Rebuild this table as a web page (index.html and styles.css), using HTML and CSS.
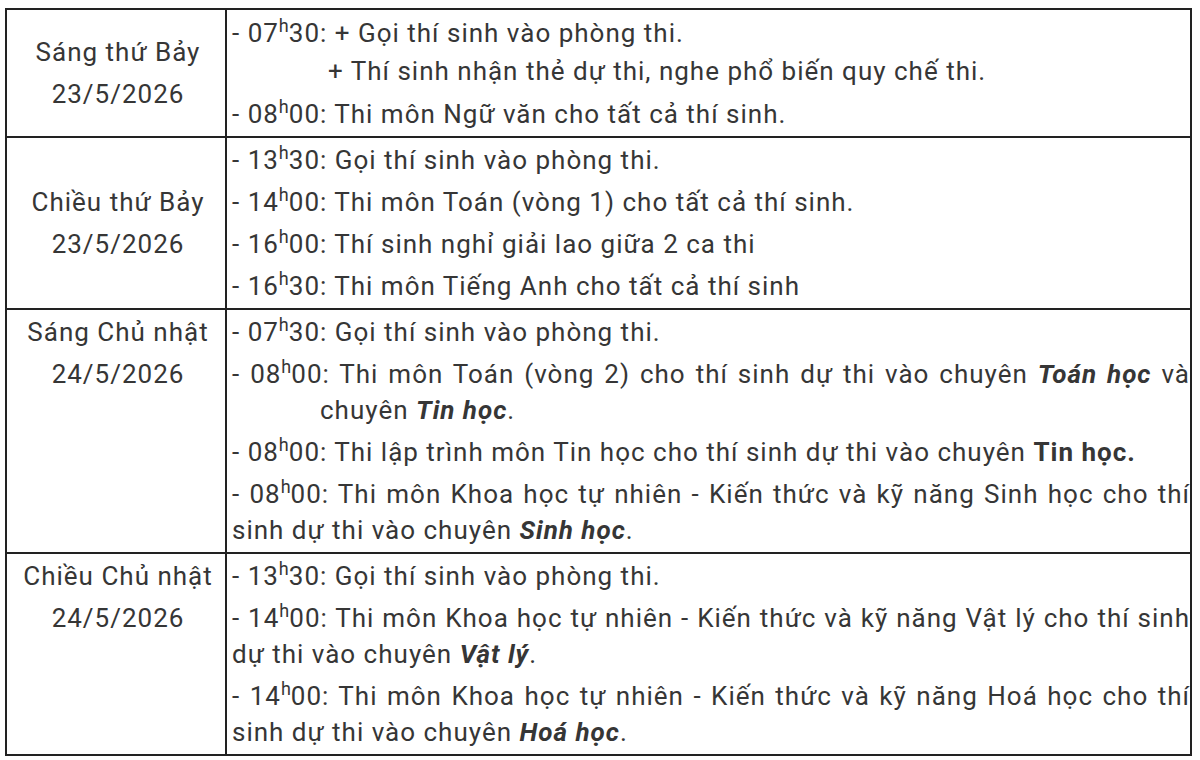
FILE: index.html
```html
<!DOCTYPE html>
<html lang="vi">
<head>
<meta charset="utf-8">
<title>Lịch thi</title>
<link rel="stylesheet" href="styles.css">
</head>
<body>
<div class="page">
  <table class="schedule">
    <tr class="row row-1">
      <td class="day day-middle">
        <p>Sáng thứ Bảy</p>
        <p>23/5/2026</p>
      </td>
      <td class="items">
        <p class="tall">- 07<sup>h</sup>30: + Gọi thí sinh vào phòng thi.<span class="sub sub-plus">+ Thí sinh nhận thẻ dự thi, nghe phổ biến quy chế thi.</span></p>
        <p>- 08<sup>h</sup>00: Thi môn Ngữ văn cho tất cả thí sinh.</p>
      </td>
    </tr>
    <tr class="row">
      <td class="day day-middle">
        <p>Chiều thứ Bảy</p>
        <p>23/5/2026</p>
      </td>
      <td class="items">
        <p>- 13<sup>h</sup>30: Gọi thí sinh vào phòng thi.</p>
        <p>- 14<sup>h</sup>00: Thi môn Toán (vòng 1) cho tất cả thí sinh.</p>
        <p>- 16<sup>h</sup>00: Thí sinh nghỉ giải lao giữa 2 ca thi</p>
        <p>- 16<sup>h</sup>30: Thi môn Tiếng Anh cho tất cả thí sinh</p>
      </td>
    </tr>
    <tr class="row">
      <td class="day day-top">
        <p>Sáng Chủ nhật</p>
        <p>24/5/2026</p>
      </td>
      <td class="items">
        <p>- 07<sup>h</sup>30: Gọi thí sinh vào phòng thi.</p>
        <p class="hang">- 08<sup>h</sup>00: Thi môn Toán (vòng 2) cho thí sinh dự thi vào chuyên <b><i>Toán học</i></b> và chuyên <b><i>Tin học</i></b>.</p>
        <p>- 08<sup>h</sup>00: Thi lập trình môn Tin học cho thí sinh dự thi vào chuyên <b>Tin học.</b></p>
        <p>- 08<sup>h</sup>00: Thi môn Khoa học tự nhiên - Kiến thức và kỹ năng Sinh học cho thí sinh dự thi vào chuyên <b><i>Sinh học</i></b>.</p>
      </td>
    </tr>
    <tr class="row">
      <td class="day day-top">
        <p>Chiều Chủ nhật</p>
        <p>24/5/2026</p>
      </td>
      <td class="items">
        <p>- 13<sup>h</sup>30: Gọi thí sinh vào phòng thi.</p>
        <p>- 14<sup>h</sup>00: Thi môn Khoa học tự nhiên - Kiến thức và kỹ năng Vật lý cho thí sinh dự thi vào chuyên <b><i>Vật lý</i></b>.</p>
        <p>- 14<sup>h</sup>00: Thi môn Khoa học tự nhiên - Kiến thức và kỹ năng Hoá học cho thí sinh dự thi vào chuyên <b><i>Hoá học</i></b>.</p>
      </td>
    </tr>
  </table>
</div>
</body>
</html>
```
FILE: styles.css
```css
html, body {
  margin: 0;
  padding: 0;
  background: #ffffff;
}

body {
  font-family: Roboto, "Liberation Sans", sans-serif;
  font-size: 26px;
  letter-spacing: 1px;
  color: #363636;
  overflow: hidden;
}

.page {
  padding: 8px 0 0 5px;
}

.schedule {
  width: 1187px;
  border-collapse: collapse;
  table-layout: fixed;
}

.schedule td {
  border: 2px solid #222222;
  padding: 4px 0;
}

.schedule p {
  margin: 0 0 6px 0;
  line-height: 36px;
}

.schedule p:last-child {
  margin-bottom: 0;
}

.day {
  width: 214px;
  text-align: center;
  padding-left: 4px !important;
}

.day-middle {
  vertical-align: middle;
}

.day-top {
  vertical-align: top;
}

.items {
  vertical-align: top;
  text-align: justify;
  padding-left: 5px !important;
}

.items sup {
  font-size: 18px;
  letter-spacing: 0;
  line-height: 0;
  vertical-align: 10px;
}

.items b {
  font-weight: 700;
}

.tall {
  line-height: 38px !important;
}

.sub {
  display: block;
}

.sub-plus {
  padding-left: 96px;
}

.hang {
  padding-left: 88px;
  text-indent: -88px;
}
```
